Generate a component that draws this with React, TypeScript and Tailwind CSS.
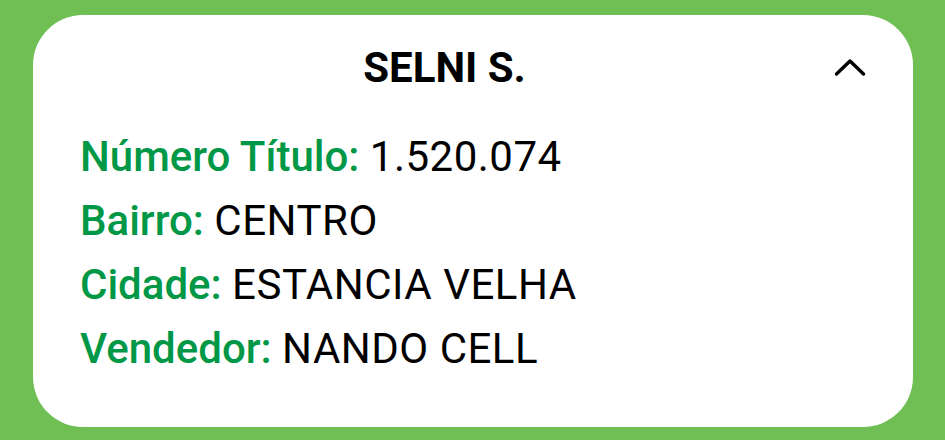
const rows = [
  { label: "Número Título:", value: "1.520.074" },
  { label: "Bairro:", value: "CENTRO" },
  { label: "Cidade:", value: "ESTANCIA VELHA" },
  { label: "Vendedor:", value: "NANDO CELL" },
];

export default function App() {
  return (
    <div
      className="h-[440px] w-[945px] bg-[#6fbf55] pl-[33px] pr-[32px] pt-[15px] pb-[13px]"
      style={{ fontFamily: "Roboto, 'Noto Sans', sans-serif" }}
    >
      <div className="h-full rounded-[50px] bg-white pl-[47px] pr-[34px] pt-[21px]">
        {/* Header */}
        <div className="flex items-center">
          <h2 className="flex-1 pr-[12px] text-center text-[42px] font-bold leading-[64px] text-black">
            SELNI S.
          </h2>
          <button className="flex h-[58px] w-[58px] items-center justify-center text-black">
            <svg width="34" height="20" viewBox="0 0 34 20" fill="none">
              <polyline
                points="3.5,16 17,3 30.5,16"
                stroke="currentColor"
                strokeWidth="3.4"
                strokeLinecap="round"
                strokeLinejoin="round"
              />
            </svg>
          </button>
        </div>

        {/* Details */}
        <div className="mt-[25px] flex flex-col">
          {rows.map((row) => (
            <p key={row.label} className="text-[42px] leading-[64px] text-black">
              <span className="font-medium text-[#009846]">{row.label}</span>{" "}
              <span className="tracking-[0.5px]">{row.value}</span>
            </p>
          ))}
        </div>
      </div>
    </div>
  );
}
